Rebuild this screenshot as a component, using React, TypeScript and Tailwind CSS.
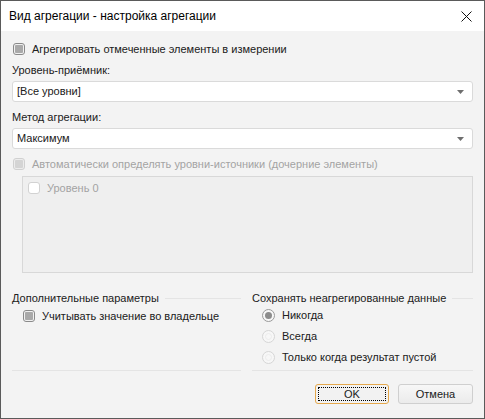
import { ReactNode } from "react";

const font = { fontFamily: '"Liberation Sans", Arial, sans-serif' };

function Check({ disabled = false, light = false }: { disabled?: boolean; light?: boolean }) {
  if (light) {
    return <span className="w-[12px] h-[12px] rounded-[3px] border border-[#d2d2d2] bg-white shrink-0" />;
  }
  return (
    <span
      className={`w-[12px] h-[12px] rounded-[3px] border shrink-0 flex items-center justify-center ${
        disabled ? "border-[#d0d0d0] bg-[#ececec]" : "border-[#8a8a8a] bg-[#f0f0f0]"
      }`}
    >
      <span className={`w-[8px] h-[8px] rounded-[1px] ${disabled ? "bg-[#d4d4d4]" : "bg-[#a9a9a9]"}`} />
    </span>
  );
}

function Radio({ checked = false }: { checked?: boolean }) {
  return (
    <span
      className={`w-[13px] h-[13px] rounded-full border shrink-0 flex items-center justify-center bg-[#f7f7f7] ${
        checked ? "border-[#9a9a9a]" : "border-[#d6d6d6]"
      }`}
    >
      {checked ? (
        <span className="w-[7px] h-[7px] rounded-full bg-[#8c8c8c]" />
      ) : (
        <span className="w-[7px] h-[7px] rounded-full border border-[#ececec]" />
      )}
    </span>
  );
}

function Select({ value }: { value: string }) {
  return (
    <div className="h-[21px] bg-white border border-[#dadada] rounded-[3px] flex items-center pl-[4px] pr-[8px] text-[11px] text-[#202020]">
      <span className="flex-1">{value}</span>
      <svg width="7" height="4" viewBox="0 0 7 4">
        <path d="M0 0h7L3.5 4z" fill="#6e6e6e" />
      </svg>
    </div>
  );
}

function GroupTitle({ children }: { children: ReactNode }) {
  return (
    <div className="flex items-center gap-[6px] h-[17px]">
      <span className="text-[11px] text-[#202020] whitespace-nowrap">{children}</span>
      <span className="flex-1 h-px bg-[#e4e4e4]" />
    </div>
  );
}

export default function App() {
  return (
    <div className="w-[485px] h-[419px] border border-[#5a5a5a] flex flex-col bg-[#f3f3f3]" style={font}>
      {/* Title bar */}
      <div className="h-[30px] bg-white flex items-center pl-[8px] pr-[12px] shrink-0">
        <span className="flex-1 text-[12px] text-black">Вид агрегации - настройка агрегации</span>
        <svg width="11" height="11" viewBox="0 0 11 11">
          <path d="M0.5 0.5l10 10M10.5 0.5l-10 10" stroke="#111" strokeWidth="1" />
        </svg>
      </div>

      {/* Body */}
      <div className="flex-1 flex flex-col px-[11px] text-[11px] text-[#202020]">
        <label className="flex items-center gap-[7px] mt-[11px] h-[14px] pl-px">
          <Check />
          <span>Агрегировать отмеченные элементы в измерении</span>
        </label>

        <div className="mt-[6px] h-[16px] leading-[16px]">Уровень-приёмник:</div>
        <div className="mt-[3px]">
          <Select value="[Все уровни]" />
        </div>

        <div className="mt-[7px] h-[16px] leading-[16px]">Метод агрегации:</div>
        <div className="mt-[3px]">
          <Select value="Максимум" />
        </div>

        <label className="flex items-center gap-[7px] mt-[8px] h-[14px] pl-px text-[#a3a3a3]">
          <Check disabled />
          <span>Автоматически определять уровни-источники (дочерние элементы)</span>
        </label>

        <div className="ml-[10px] mt-[5px] h-[97px] border border-[#d8d8d8] bg-[#efefef] pt-[4px] pl-[5px]">
          <label className="flex items-center gap-[7px] h-[14px] text-[#a3a3a3]">
            <Check light />
            <span>Уровень 0</span>
          </label>
        </div>

        {/* Two columns */}
        <div className="grid grid-cols-[229px_221px] gap-x-[11px] mt-[17px]">
          <div className="flex flex-col">
            <GroupTitle>Дополнительные параметры</GroupTitle>
            <label className="flex items-center gap-[7px] ml-[11px] mt-[2px] h-[14px]">
              <Check />
              <span>Учитывать значение во владельце</span>
            </label>
          </div>
          <div className="flex flex-col">
            <GroupTitle>Сохранять неагрегированные данные</GroupTitle>
            <div className="flex flex-col gap-[7px] ml-[10px] mt-[1px]">
              <label className="flex items-center gap-[7px] h-[14px]">
                <Radio checked />
                <span>Никогда</span>
              </label>
              <label className="flex items-center gap-[7px] h-[14px]">
                <Radio />
                <span>Всегда</span>
              </label>
              <label className="flex items-center gap-[7px] h-[14px]">
                <Radio />
                <span>Только когда результат пустой</span>
              </label>
            </div>
          </div>
          <div className="h-px bg-[#e4e4e4] mt-[6px]" />
          <div className="h-px bg-[#e4e4e4] mt-[6px]" />
        </div>

        {/* Buttons */}
        <div className="flex justify-end gap-[9px] mt-[13px]">
          <button className="w-[74px] h-[20px] rounded-[3px] border border-[#e5a84c] bg-[#f2f2f2] p-[2px] text-[11px] text-[#202020]">
            <span className="w-full h-full flex items-center justify-center border border-dotted border-black">OK</span>
          </button>
          <button className="w-[75px] h-[20px] rounded-[3px] border border-[#cfcfcf] bg-gradient-to-b from-[#f7f7f7] to-[#ebebeb] text-[11px] text-[#202020]">
            Отмена
          </button>
        </div>
      </div>
    </div>
  );
}
